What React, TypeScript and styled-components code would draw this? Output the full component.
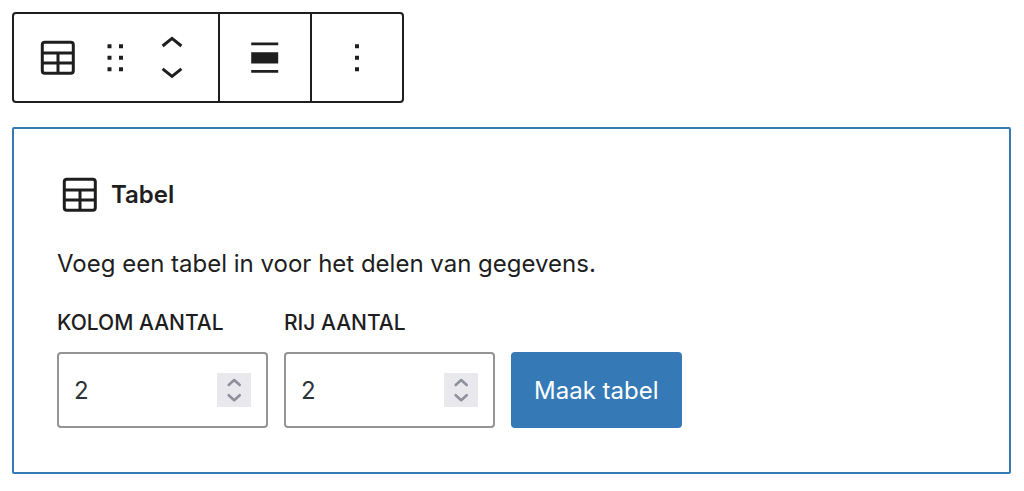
import React, { useState } from "react";
import styled, { createGlobalStyle } from "styled-components";

const ink = "#1e1e1e";
const accent = "#357ab7";

const GlobalStyle = createGlobalStyle`
  *, *::before, *::after { box-sizing: border-box; }
  body {
    margin: 0;
    background: #fff;
    color: ${ink};
    font-family: Inter, "Liberation Sans", sans-serif;
    font-size: 24px;
    line-height: 32px;
  }
  button, input { font: inherit; }
`;

const Editor = styled.main`
  display: flex;
  flex-direction: column;
  align-items: flex-start;
  gap: 24px;
  padding: 12px 13px 18px 12px;
`;

const Toolbar = styled.div`
  display: flex;
  border: 2px solid ${ink};
  border-radius: 4px;
  background: #fff;
`;

const ToolbarGroup = styled.div`
  display: flex;
  align-items: center;
  gap: 11px;
  height: 87px;
  padding: 0 22px;

  &:first-child {
    padding: 0 23px 0 21px;
  }

  & + & {
    border-left: 2px solid ${ink};
  }
`;

const ToolButton = styled.button`
  display: flex;
  align-items: center;
  justify-content: center;
  width: 46px;
  height: 46px;
  padding: 0;
  border: 0;
  background: none;
  color: inherit;
  cursor: pointer;
`;

const Movers = styled.div`
  display: flex;
  flex-direction: column;
`;

const MoverButton = styled(ToolButton)`
  height: 30px;
`;

const Placeholder = styled.section`
  width: 100%;
  padding: 43px 43px 44px;
  border: 2px solid ${accent};
  border-radius: 2px;
`;

const Heading = styled.h2`
  display: flex;
  align-items: center;
  gap: 8px;
  margin: 0;
  font-size: 24px;
  line-height: 46px;
  font-weight: 600;
`;

const Instructions = styled.p`
  margin: 30px 0 28px;
`;

const Form = styled.form`
  display: flex;
  flex-wrap: wrap;
  align-items: flex-end;
  gap: 16px;
`;

const Field = styled.div`
  display: flex;
  flex-direction: column;
  gap: 14px;
  width: 211px;
`;

const Label = styled.label`
  font-size: 21px;
  line-height: 30px;
  font-weight: 500;
  text-transform: uppercase;
  white-space: nowrap;
`;

const NumberBox = styled.div`
  display: flex;
  align-items: center;
  height: 76px;
  padding: 0 15px;
  border: 2px solid #949494;
  border-radius: 4px;
`;

const NumberInput = styled.input`
  flex: 1;
  min-width: 0;
  padding: 2px 0 0;
  border: 0;
  outline: 0;
  background: none;
  color: #2c3338;
  appearance: textfield;

  &::-webkit-inner-spin-button,
  &::-webkit-outer-spin-button {
    appearance: none;
    margin: 0;
  }
`;

const Stepper = styled.div`
  display: flex;
  flex-direction: column;
  background: #e9e9ed;
`;

const StepButton = styled.button`
  display: block;
  width: 34px;
  height: 17px;
  padding: 0;
  border: 0;
  background: none;
  color: #8f8f9d;
  cursor: pointer;

  svg { display: block; }
`;

const SubmitButton = styled.button`
  height: 76px;
  padding: 2px 23px 0;
  border: 0;
  border-radius: 4px;
  background: ${accent};
  color: #fff;
  white-space: nowrap;
  cursor: pointer;
`;

const TableIcon = () => (
  <svg width="46" height="46" viewBox="0 0 46 46" fill="none" stroke="currentColor" strokeWidth="3" aria-hidden="true">
    <rect x="7.3" y="7.3" width="31" height="31" rx="2.5" />
    <path d="M7 18.1H38.5M7 28H38.5M23 18V38.5" />
  </svg>
);

const DragIcon = () => (
  <svg width="46" height="46" viewBox="0 0 46 46" fill="currentColor" aria-hidden="true">
    <path d="M15.5 9.3h4v4h-4zM27 9.3h4v4h-4zM15.5 20.8h4v4h-4zM27 20.8h4v4h-4zM15.5 32.2h4v4h-4zM27 32.2h4v4h-4z" />
  </svg>
);

const ChevronIcon = ({ down = false }: { down?: boolean }) => (
  <svg width="46" height="30" viewBox="0 0 46 30" fill="none" stroke="currentColor" strokeWidth="3" aria-hidden="true">
    <path d={down ? "M13.6 10.8L23 18.4L32.4 10.8" : "M13.6 18L23 10.4L32.4 18"} />
  </svg>
);

const AlignIcon = () => (
  <svg width="46" height="46" viewBox="0 0 46 46" fill="currentColor" aria-hidden="true">
    <path d="M9.2 7.4h27v2.8h-27zM9.2 17.2h27v11.2h-27zM9.2 35h27v2.8h-27z" />
  </svg>
);

const MoreIcon = () => (
  <svg width="46" height="46" viewBox="0 0 46 46" fill="currentColor" aria-hidden="true">
    <path d="M21 9.3h4v4h-4zM21 20.8h4v4h-4zM21 32.2h4v4h-4z" />
  </svg>
);

const StepIcon = ({ down = false }: { down?: boolean }) => (
  <svg width="34" height="17" viewBox="0 0 34 17" fill="none" stroke="currentColor" strokeWidth="2.6" strokeLinecap="round" strokeLinejoin="round" aria-hidden="true">
    <path d={down ? "M11.7 5.2L17.2 10.2L22.7 5.2" : "M11.7 12L17.2 7L22.7 12"} />
  </svg>
);

interface NumberFieldProps {
  id: string;
  label: string;
  value: number;
  onChange: (value: number) => void;
}

function NumberField({ id, label, value, onChange }: NumberFieldProps) {
  return (
    <Field>
      <Label htmlFor={id}>{label}</Label>
      <NumberBox>
        <NumberInput
          id={id}
          type="number"
          min={1}
          value={value}
          onChange={(event) => onChange(Number(event.target.value))}
        />
        <Stepper>
          <StepButton type="button" aria-label={`${label} verhogen`} onClick={() => onChange(value + 1)}>
            <StepIcon />
          </StepButton>
          <StepButton type="button" aria-label={`${label} verlagen`} onClick={() => onChange(Math.max(1, value - 1))}>
            <StepIcon down />
          </StepButton>
        </Stepper>
      </NumberBox>
    </Field>
  );
}

export default function App() {
  const [columns, setColumns] = useState(2);
  const [rows, setRows] = useState(2);

  return (
    <>
      <GlobalStyle />
      <Editor>
        <Toolbar role="toolbar" aria-label="Blokgereedschap">
          <ToolbarGroup>
            <ToolButton type="button" aria-label="Tabel"><TableIcon /></ToolButton>
            <ToolButton type="button" aria-label="Slepen"><DragIcon /></ToolButton>
            <Movers>
              <MoverButton type="button" aria-label="Omhoog"><ChevronIcon /></MoverButton>
              <MoverButton type="button" aria-label="Omlaag"><ChevronIcon down /></MoverButton>
            </Movers>
          </ToolbarGroup>
          <ToolbarGroup>
            <ToolButton type="button" aria-label="Uitlijnen"><AlignIcon /></ToolButton>
          </ToolbarGroup>
          <ToolbarGroup>
            <ToolButton type="button" aria-label="Opties"><MoreIcon /></ToolButton>
          </ToolbarGroup>
        </Toolbar>

        <Placeholder>
          <Heading><TableIcon />Tabel</Heading>
          <Instructions>Voeg een tabel in voor het delen van gegevens.</Instructions>
          <Form onSubmit={(event) => event.preventDefault()}>
            <NumberField id="columns" label="Kolom aantal" value={columns} onChange={setColumns} />
            <NumberField id="rows" label="Rij aantal" value={rows} onChange={setRows} />
            <SubmitButton type="submit">Maak tabel</SubmitButton>
          </Form>
        </Placeholder>
      </Editor>
    </>
  );
}
